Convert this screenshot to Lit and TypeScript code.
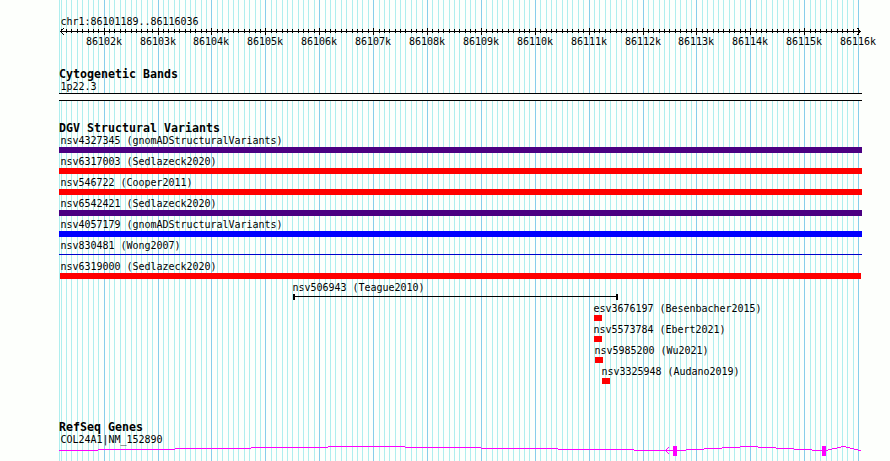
import { LitElement, html, svg, css } from "lit";

const START = 86101189;
const END = 86116036;
const LEFT = 60;
const SCALE = 800 / (END - START);
const px = (bp: number) => Math.round(LEFT + (bp - START) * SCALE);

const ticks: { x: number; bp: number; major: boolean }[] = [];
for (let bp = 86101200; bp <= 86116000; bp += 100) {
  ticks.push({ x: px(bp), bp, major: bp % 1000 === 0 });
}

// label, label row, colour, bar x, bar width, bar height
const variants: [string, number, string, number, number, number][] = [
  ["nsv4327345 (gnomADStructuralVariants)", 140, "#4b0082", 59, 803, 6],
  ["nsv6317003 (Sedlazeck2020)", 161, "#ff0000", 59, 803, 6],
  ["nsv546722 (Cooper2011)", 182, "#ff0000", 59, 803, 6],
  ["nsv6542421 (Sedlazeck2020)", 203, "#4b0082", 59, 803, 6],
  ["nsv4057179 (gnomADStructuralVariants)", 224, "#0000ff", 59, 803, 6],
  ["nsv830481 (Wong2007)", 245, "#0000cd", 59, 803, 1],
  ["nsv6319000 (Sedlazeck2020)", 266, "#ff0000", 60, 801, 6],
  ["esv3676197 (Besenbacher2015)", 308, "#ff0000", 594, 8, 6],
  ["nsv5573784 (Ebert2021)", 329, "#ff0000", 594, 8, 6],
  ["nsv5985200 (Wu2021)", 350, "#ff0000", 595, 8, 6],
  ["nsv3325948 (Audano2019)", 371, "#ff0000", 602, 8, 6],
];

// from x, to x, y
const intron: [number, number, number][] = [
  [59, 98, 450], [98, 175, 449], [175, 251, 448], [251, 328, 447], [328, 405, 446],
  [405, 481, 447], [481, 558, 448], [558, 634, 449], [634, 686, 450],
  [686, 704, 449], [704, 722, 448], [722, 740, 447], [740, 758, 446],
  [758, 776, 447], [776, 794, 448], [794, 812, 449], [812, 828, 450],
  [828, 832, 449], [832, 837, 448], [837, 841, 447], [841, 846, 446],
  [846, 850, 447], [850, 854, 448], [854, 858, 449], [858, 861, 450],
];

class AppRoot extends LitElement {
  static styles = css`
    :host { display: block; width: 890px; height: 461px; background: #fdfffc; overflow: hidden; }
    svg { display: block; }
    text { font-family: "DejaVu Sans Mono", "Liberation Mono", monospace; font-size: 10px; fill: #000; white-space: pre; }
    .title { font-weight: bold; font-size: 11.6px; }
  `;

  label(x: number, y: number, s: string) {
    return svg`<text x=${x + 0.5} y=${y + 4} textLength=${s.length * 6} lengthAdjust="spacing">${s}</text>`;
  }
  heading(y: number, s: string) {
    return svg`<text class="title" x="59" y=${y + 4} textLength=${s.length * 7} lengthAdjust="spacing">${s}</text>`;
  }
  box(x: number, y: number, w: number, h: number, fill = "#000") {
    return svg`<rect x=${x} y=${y} width=${w} height=${h} fill=${fill}></rect>`;
  }
  arrow(x: number, y: number, dir: number, size: number, fill: string) {
    return Array.from({ length: size }, (_, i) => i + 1).map(
      (i) => svg`${this.box(x + dir * i, y - i, 1, 1, fill)}${this.box(x + dir * i, y + i, 1, 1, fill)}`
    );
  }

  render() {
    return html`<svg width="890" height="461" viewBox="0 0 890 461" shape-rendering="crispEdges">
      ${this.box(59, 0, 1, 461, "#afeeee")}
      ${ticks.map((t) => this.box(t.x, 0, 1, 461, t.major ? "#87ceeb" : "#afeeee"))}
      ${this.label(60, 21, "chr1:86101189..86116036")}
      ${this.box(60, 31, 801, 1)}
      ${ticks.map((t) => (t.major ? this.box(t.x, 28, 1, 7) : this.box(t.x, 29, 1, 4)))}
      ${this.arrow(60, 31, 1, 3, "#000")}${this.arrow(860, 31, -1, 3, "#000")}
      ${ticks.filter((t) => t.major).map((t) => this.label(t.x - 18.5, 41, `${t.bp / 1000}k`))}
      ${this.heading(74, "Cytogenetic Bands")}
      ${this.label(60, 86, "1p22.3")}
      ${this.box(59, 93, 803, 8, "#fdfffc")}${this.box(59, 93, 803, 1)}${this.box(59, 100, 803, 1)}
      ${this.heading(128, "DGV Structural Variants")}
      ${variants.map(([s, y, c, x, w, h]) => svg`${this.label(Math.max(60, x - 1), y, s)}${this.box(x, h === 1 ? y + 9 : y + 7, w, h, c)}`)}
      ${this.label(292, 287, "nsv506943 (Teague2010)")}
      ${this.box(293, 296, 324, 1)}${this.box(293, 294, 2, 6)}${this.box(616, 294, 2, 6)}
      ${this.heading(427, "RefSeq Genes")}
      ${this.label(60, 439, "COL24A1|NM_152890")}
      ${intron.map(([a, b, y]) => this.box(a, y, b - a, 1, "#ff00ff"))}
      ${this.arrow(665, 450, 1, 3, "#ff00ff")}
      ${this.box(673, 446, 4, 10, "#ff00ff")}${this.box(822, 446, 4, 10, "#ff00ff")}
    </svg>`;
  }
}
customElements.define("app-root", AppRoot);
